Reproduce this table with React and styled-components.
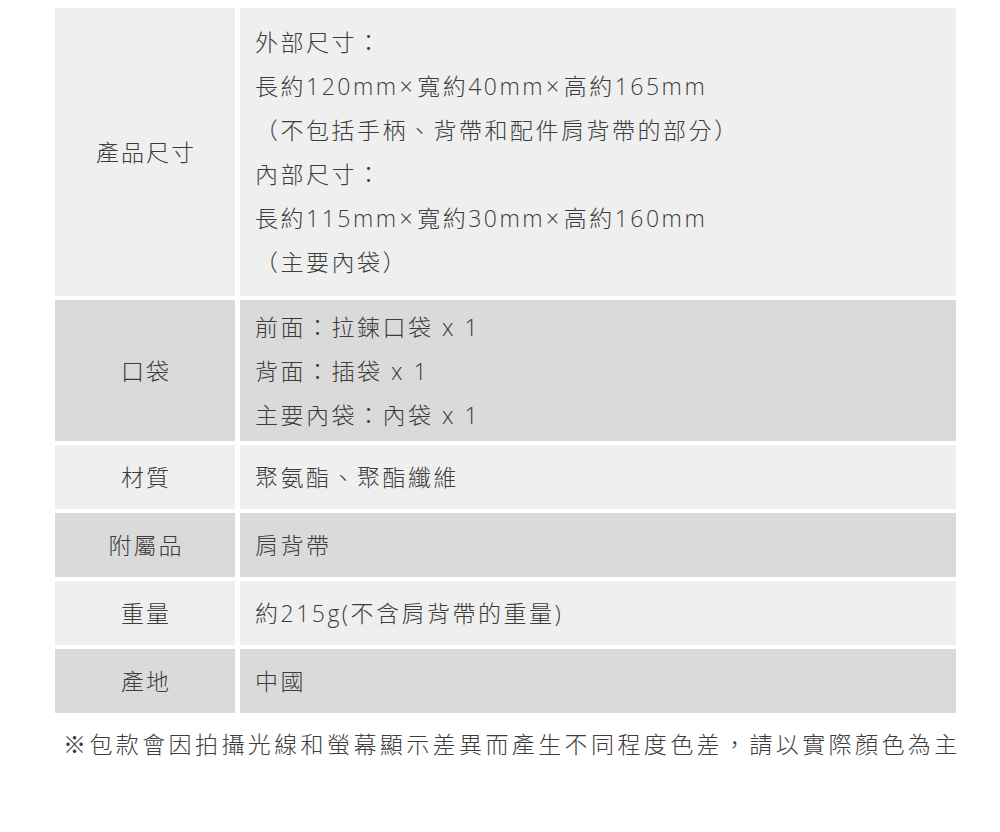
import React from "react";
import styled, { createGlobalStyle } from "styled-components";

const Global = createGlobalStyle`
  html, body { margin: 0; padding: 0; background: #ffffff; }
  body {
    font-family: "Open Sans", "Noto Sans CJK TC", sans-serif;
    color: #3c3c3c;
    text-spacing-trim: space-all;
  }
`;

const Page = styled.div`
  width: 1000px;
  padding: 8px 44px 40px 55px;
  box-sizing: border-box;
`;

const Table = styled.div`
  display: grid;
  grid-template-columns: 180px 716px;
  column-gap: 5px;
  row-gap: 4px;
  width: 901px;
`;

const Label = styled.div`
  background: ${(p) => (p.$dark ? "#dadada" : "#efefef")};
  display: flex;
  align-items: center;
  justify-content: center;
  font-size: 23px;
  font-weight: 300;
  letter-spacing: 2px;
  line-height: 44px;
  padding-left: 2px;
`;

const Value = styled.div`
  background: ${(p) => (p.$dark ? "#dadada" : "#efefef")};
  padding: ${(p) => p.$pad || "10px"} 15px;
  font-size: 23px;
  font-weight: 300;
  letter-spacing: 2.5px;
  line-height: 44px;
`;

const Line = styled.div`
  white-space: nowrap;
  height: 44px;
  overflow: visible;
  text-spacing-trim: space-all;
`;

const Cross = styled.span`
  margin: 0 2px 0 1px;
`;

const Note = styled.p`
  margin: 9px 0 0 8px;
  font-size: 23px;
  font-weight: 300;
  letter-spacing: 3.4px;
  line-height: 44px;
  white-space: nowrap;
`;

const renderLine = (text) => {
  const parts = text.split("×");
  return parts.map((p, i) => (
    <React.Fragment key={i}>
      {p}
      {i < parts.length - 1 && <Cross>×</Cross>}
    </React.Fragment>
  ));
};

const rows = [
  {
    label: "產品尺寸",
    pad: "12px",
    lines: [
      "外部尺寸：",
      "長約120mm×寬約40mm×高約165mm",
      "（不包括手柄、背帶和配件肩背帶的部分）",
      "內部尺寸：",
      "長約115mm×寬約30mm×高約160mm",
      "（主要內袋）",
    ],
  },
  {
    label: "口袋",
    dark: true,
    pad: "4.5px",
    lines: ["前面：拉鍊口袋 x 1", "背面：插袋 x 1", "主要內袋：內袋 x 1"],
  },
  { label: "材質", lines: ["聚氨酯、聚酯纖維"] },
  { label: "附屬品", dark: true, lines: ["肩背帶"] },
  { label: "重量", lines: ["約215g(不含肩背帶的重量)"] },
  { label: "產地", dark: true, lines: ["中國"] },
];

export default function App() {
  return (
    <Page>
      <Global />
      <Table>
        {rows.map((r) => (
          <React.Fragment key={r.label}>
            <Label $dark={r.dark}>{r.label}</Label>
            <Value $dark={r.dark} $pad={r.pad}>
              {r.lines.map((l) => (
                <Line key={l}>{renderLine(l)}</Line>
              ))}
            </Value>
          </React.Fragment>
        ))}
      </Table>
      <Note>※包款會因拍攝光線和螢幕顯示差異而產生不同程度色差，請以實際顏色為主</Note>
    </Page>
  );
}
